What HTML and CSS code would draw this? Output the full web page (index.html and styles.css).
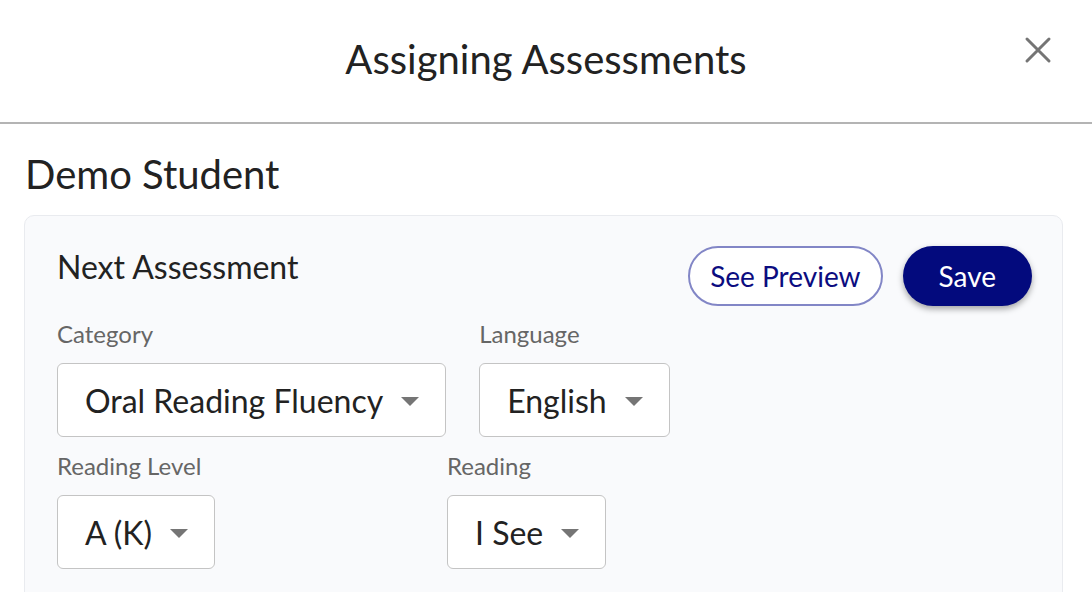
FILE: index.html
```html
<!DOCTYPE html>
<html lang="en">
<head>
    <meta charset="UTF-8">
    <meta name="viewport" content="width=device-width, initial-scale=1.0">
    <title>Assigning Assessments</title>
    <link rel="stylesheet" href="styles.css">
</head>
<body>

    <!-- Modal header -->
    <header class="modal-header">
        <span></span>
        <h2 class="modal-title">Assigning Assessments</h2>
        <button class="close-button" aria-label="Close">
            <svg width="28" height="28" viewBox="0 0 28 28">
                <path d="M3 3 L25 25 M25 3 L3 25" stroke="#757575" stroke-width="3" stroke-linecap="round" fill="none"/>
            </svg>
        </button>
    </header>

    <main class="modal-body">
        <h1 class="student-name">Demo Student</h1>

        <!-- Next assessment card -->
        <section class="card">
            <div class="card-head">
                <h3 class="card-title">Next Assessment</h3>
                <div class="actions">
                    <button class="btn btn-outline">See Preview</button>
                    <button class="btn btn-solid">Save</button>
                </div>
            </div>

            <div class="field-row">
                <div class="field">
                    <label>Category</label>
                    <div class="select">
                        <span>Oral Reading Fluency</span>
                        <span class="caret"></span>
                    </div>
                </div>
                <div class="field">
                    <label>Language</label>
                    <div class="select">
                        <span>English</span>
                        <span class="caret"></span>
                    </div>
                </div>
            </div>

            <div class="field-row">
                <div class="field field-level">
                    <label>Reading Level</label>
                    <div class="select">
                        <span>A (K)</span>
                        <span class="caret"></span>
                    </div>
                </div>
                <div class="field">
                    <label>Reading</label>
                    <div class="select">
                        <span>I See</span>
                        <span class="caret"></span>
                    </div>
                </div>
            </div>
        </section>
    </main>

</body>
</html>
```

FILE: styles.css
```css
/* General styles */
body {
    font-family: Lato, "Open Sans", sans-serif;
    margin: 0;
    background-color: #fff;
    color: #222;
    overflow: hidden;
}

/* Header */
.modal-header {
    display: grid;
    grid-template-columns: 1fr auto 1fr;
    align-items: center;
    height: 122px;
    border-bottom: 2px solid #b4b4b4;
}

.modal-title {
    margin: 0;
    font-size: 40px;
    font-weight: 400;
    line-height: 48px;
    padding-bottom: 4px;
}

.close-button {
    justify-self: end;
    margin-right: 40px;
    margin-bottom: 22px;
    padding: 0;
    border: none;
    background: none;
    display: flex;
}

/* Body */
.modal-body {
    padding: 0 29px 0 24px;
}

.student-name {
    margin: 26px 0 0 1px;
    font-size: 40px;
    font-weight: 400;
    line-height: 48px;
}

/* Card */
.card {
    margin-top: 17px;
    background-color: #f9fafc;
    border: 1px solid #e9ebef;
    border-radius: 10px;
    padding: 30px 30px 40px 32px;
}

.card-head {
    display: flex;
    justify-content: space-between;
    align-items: flex-start;
}

.card-title {
    margin: 2px 0 0;
    font-size: 32px;
    font-weight: 400;
    line-height: 38px;
}

.actions {
    display: flex;
    gap: 20px;
}

.btn {
    font-family: Lato, sans-serif;
    font-size: 28px;
    height: 60px;
    border-radius: 30px;
    cursor: pointer;
}

.btn-outline {
    padding: 0 20px;
    background: #fff;
    color: #0b0c80;
    border: 2px solid #8286c6;
}

.btn-solid {
    padding: 0 36px;
    background: #030a7d;
    color: #fff;
    border: none;
    box-shadow: 0 3px 6px rgba(0, 0, 0, 0.35);
}

/* Form fields */
.field-row {
    display: flex;
    gap: 33px;
    margin-top: 14px;
}

.field-row + .field-row {
    margin-top: 15px;
}

.field {
    display: flex;
    flex-direction: column;
    align-items: flex-start;
}

.field-level {
    width: 357px;
}

.field label {
    font-size: 24px;
    line-height: 28px;
    color: #666;
    margin-bottom: 15px;
}

.select {
    display: flex;
    align-items: center;
    gap: 18px;
    height: 72px;
    padding: 0 26px 0 27px;
    background: #fff;
    border: 1px solid #c4c4c4;
    border-radius: 6px;
    font-size: 32px;
    color: #222;
}

.caret {
    width: 0;
    height: 0;
    margin-top: 2px;
    border-left: 9px solid transparent;
    border-right: 9px solid transparent;
    border-top: 9px solid #757575;
}
```
